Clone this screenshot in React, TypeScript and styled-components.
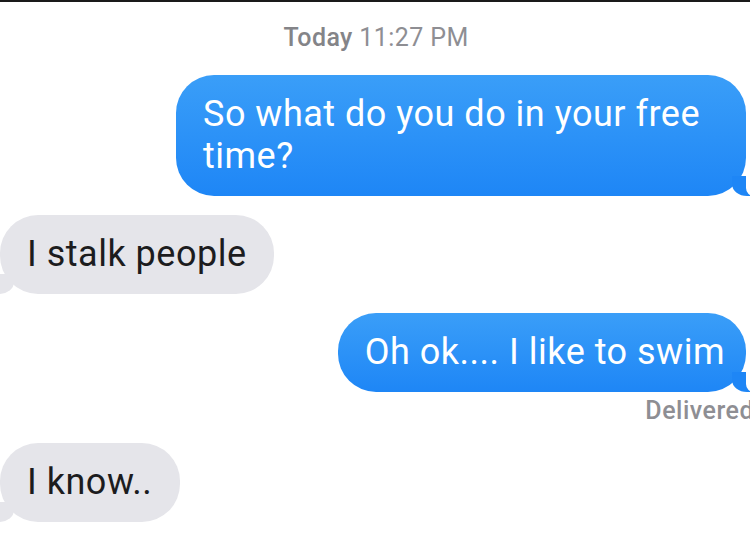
import React from 'react';
import styled, { createGlobalStyle, css } from 'styled-components';

const GlobalStyle = createGlobalStyle`
  html, body {
    margin: 0;
    padding: 0;
    background: #ffffff;
  }
  body {
    font-family: Roboto, "Liberation Sans", Arial, sans-serif;
    overflow: hidden;
  }
`;

const Thread = styled.div`
  width: 750px;
  height: 549px;
  box-sizing: border-box;
  border-top: 2px solid #1a1a1a;
  padding-top: 21px;
  display: flex;
  flex-direction: column;
  overflow: hidden;
`;

const Stamp = styled.div`
  align-self: center;
  font-size: 25px;
  line-height: 30px;
  letter-spacing: 0.4px;
  color: #8e8e93;
  margin-bottom: 22px;
  margin-left: 2px;

  b {
    font-weight: 500;
    color: #848488;
  }
`;

const Bubble = styled.div<{ $mine?: boolean }>`
  position: relative;
  box-sizing: border-box;
  max-width: 570px;
  padding: 18px 21px 19px 27px;
  border-radius: 38px;
  font-size: 36px;
  line-height: 42px;
  letter-spacing: 0.5px;

  ${({ $mine }) =>
    $mine
      ? css`
          align-self: flex-end;
          margin-right: 4px;
          color: #ffffff;
          background: linear-gradient(180deg, #3a9ef8 0%, #1e86f6 100%);

          &::before {
            content: '';
            position: absolute;
            right: -6px;
            bottom: 0;
            width: 20px;
            height: 20px;
            background: #1e86f6;
            border-bottom-left-radius: 15px 12px;
          }
          &::after {
            content: '';
            position: absolute;
            right: -12px;
            bottom: 0;
            width: 12px;
            height: 20px;
            background: #ffffff;
            border-bottom-left-radius: 8px;
          }
        `
      : css`
          align-self: flex-start;
          margin-left: 0;
          padding-right: 28px;
          color: #1c1c1e;
          background: #e5e5ea;

          &::before {
            content: '';
            position: absolute;
            left: -6px;
            bottom: 0;
            width: 20px;
            height: 20px;
            background: #e5e5ea;
            border-bottom-right-radius: 15px 12px;
          }
          &::after {
            content: '';
            position: absolute;
            left: -12px;
            bottom: 0;
            width: 12px;
            height: 20px;
            background: #ffffff;
            border-bottom-right-radius: 8px;
          }
        `}
`;

const Label = styled.span`
  position: relative;
  z-index: 1;
`;

const Receipt = styled.div`
  align-self: flex-end;
  margin-right: -4px;
  margin-top: 5px;
  font-size: 25px;
  line-height: 28px;
  letter-spacing: 0.5px;
  font-weight: 500;
  color: #8e8e93;
`;

const Gap = styled.div<{ $h: number }>`
  height: ${({ $h }) => $h}px;
  flex-shrink: 0;
`;

const messages = [
  { mine: true, text: 'So what do you do in your free time?' },
  { mine: false, text: 'I stalk people' },
  { mine: true, text: 'Oh ok.... I like to swim', receipt: 'Delivered' },
  { mine: false, text: 'I know..' },
];

const App: React.FC = () => (
  <>
    <GlobalStyle />
    <Thread>
      <Stamp>
        <b>Today</b> 11:27 PM
      </Stamp>
      {messages.map((m, i) => {
        const prev = messages[i - 1];
        const gap = !prev ? 0 : prev.receipt ? 18 : i === 1 ? 19 : 19;
        return (
          <React.Fragment key={i}>
            {i > 0 && <Gap $h={gap} />}
            <Bubble $mine={m.mine}>
              <Label>{m.text}</Label>
            </Bubble>
            {m.receipt && <Receipt>{m.receipt}</Receipt>}
          </React.Fragment>
        );
      })}
    </Thread>
  </>
);

export default App;
